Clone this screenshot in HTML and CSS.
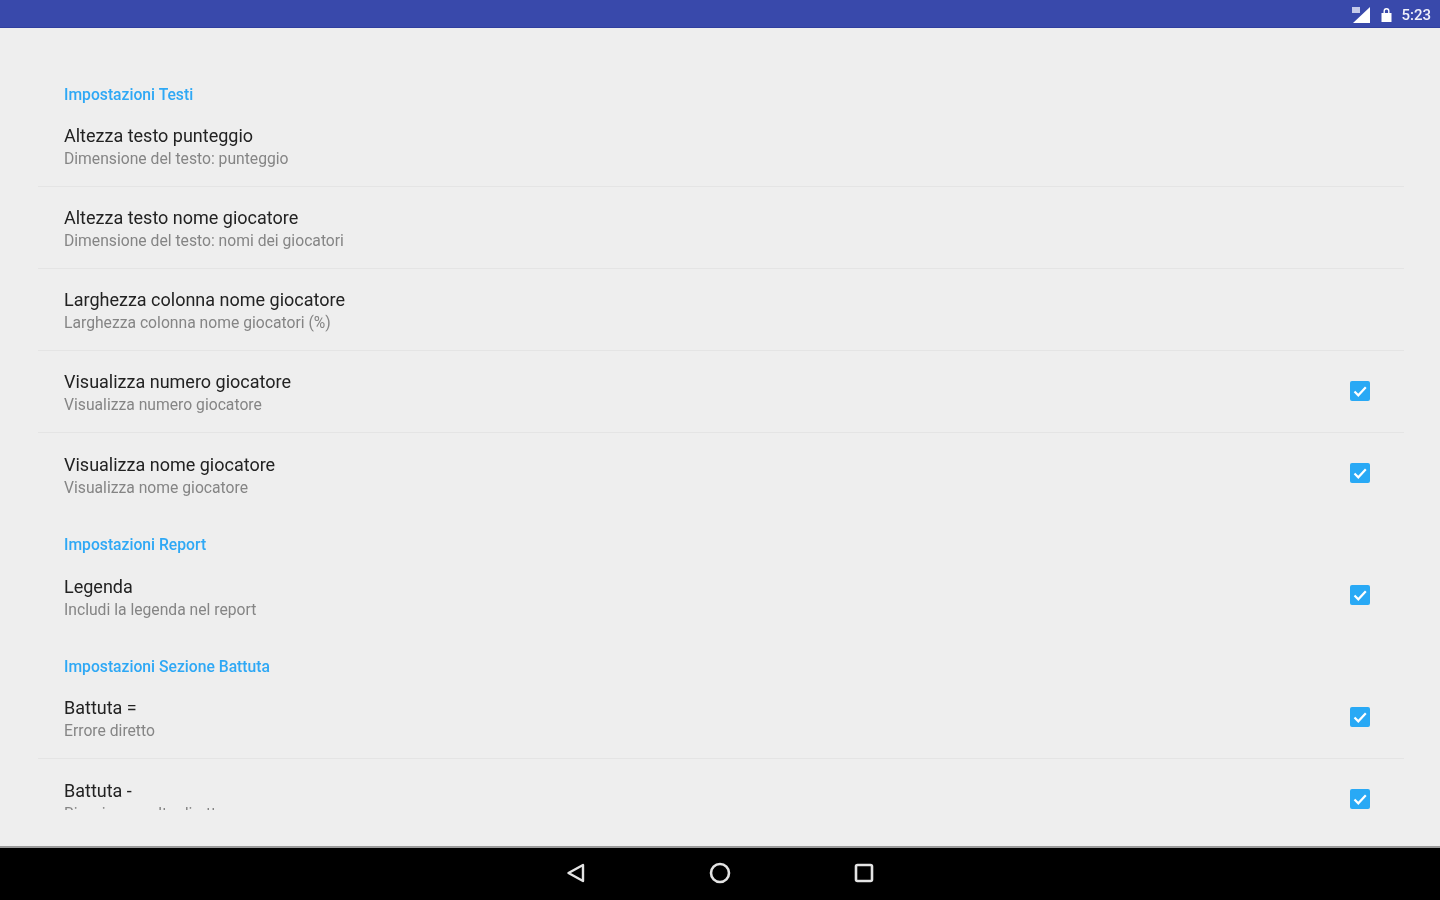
FILE: index.html
```html
<!DOCTYPE html>
<html lang="it">
<head>
<meta charset="utf-8">
<title>Impostazioni</title>
<link rel="stylesheet" href="styles.css">
</head>
<body>
<div class="screen">
  <header class="status">
    <svg class="ic-signal" viewBox="0 0 20 18"><path d="M19 1v16H2z" fill="#fff"/><path d="M1 1h8v6H1z" fill="#c5cae9"/></svg>
    <svg class="ic-lock" viewBox="0 0 12 16"><path d="M1 6h10v9H1zM3 6V4a3 3 0 0 1 6 0v2H7.600V4a1.600 1.600 0 0 0-3.200 0v2z" fill="#fff"/></svg>
    <span class="clock">5:23</span>
  </header>
  <main class="list">
    <h2 class="cat cat-first">Impostazioni Testi</h2>
    <div class="row div"><div class="txt"><div class="title">Altezza testo punteggio</div><div class="sub">Dimensione del testo: punteggio</div></div></div>
    <div class="row div"><div class="txt"><div class="title">Altezza testo nome giocatore</div><div class="sub">Dimensione del testo: nomi dei giocatori</div></div></div>
    <div class="row div"><div class="txt"><div class="title">Larghezza colonna nome giocatore</div><div class="sub">Larghezza colonna nome giocatori (%)</div></div></div>
    <div class="row div"><div class="txt"><div class="title">Visualizza numero giocatore</div><div class="sub">Visualizza numero giocatore</div></div><span class="check"><svg viewBox="0 0 20 20"><path d="M4.500 10.500l3.800 3.800 7.500-8" fill="none" stroke="#fff" stroke-width="2.200"/></svg></span></div>
    <div class="row"><div class="txt"><div class="title">Visualizza nome giocatore</div><div class="sub">Visualizza nome giocatore</div></div><span class="check"><svg viewBox="0 0 20 20"><path d="M4.500 10.500l3.800 3.800 7.500-8" fill="none" stroke="#fff" stroke-width="2.200"/></svg></span></div>
    <h2 class="cat">Impostazioni Report</h2>
    <div class="row"><div class="txt"><div class="title">Legenda</div><div class="sub">Includi la legenda nel report</div></div><span class="check"><svg viewBox="0 0 20 20"><path d="M4.500 10.500l3.800 3.800 7.500-8" fill="none" stroke="#fff" stroke-width="2.200"/></svg></span></div>
    <h2 class="cat">Impostazioni Sezione Battuta</h2>
    <div class="row div"><div class="txt"><div class="title">Battuta =</div><div class="sub">Errore diretto</div></div><span class="check"><svg viewBox="0 0 20 20"><path d="M4.500 10.500l3.800 3.800 7.500-8" fill="none" stroke="#fff" stroke-width="2.200"/></svg></span></div>
    <div class="row"><div class="txt"><div class="title">Battuta -</div><div class="sub">Ricezione molto diretto</div></div><span class="check"><svg viewBox="0 0 20 20"><path d="M4.500 10.500l3.800 3.800 7.500-8" fill="none" stroke="#fff" stroke-width="2.200"/></svg></span></div>
  </main>
  <nav class="nav">
    <svg class="nav-ic" viewBox="0 0 24 24"><path d="M19 4v16L4.500 12z" fill="none" stroke="#e4e4e4" stroke-width="2.400" stroke-linejoin="round"/></svg>
    <svg class="nav-ic" viewBox="0 0 24 24"><circle cx="12" cy="12" r="9" fill="none" stroke="#e4e4e4" stroke-width="2.600"/></svg>
    <svg class="nav-ic" viewBox="0 0 24 24"><rect x="4" y="4" width="16" height="16" rx="1.500" fill="none" stroke="#e4e4e4" stroke-width="2.600"/></svg>
  </nav>
</div>
</body>
</html>
```
FILE: styles.css
```css
html, body { margin: 0; padding: 0; }
body { background: #eeeeee; font-family: Roboto, "Liberation Sans", sans-serif; }
.screen { width: 1440px; height: 900px; display: flex; flex-direction: column; overflow: hidden; }
.status { height: 28px; flex: none; box-sizing: border-box; background: #3949ab; border-bottom: 1px solid #303f9f; display: flex; align-items: center; justify-content: flex-end; padding: 3px 9px 0 0; gap: 9px; color: #f0f1fa; }
.ic-signal { width: 20px; height: 18px; filter: blur(0.7px); }
.ic-lock { width: 13px; height: 16px; margin-right: -1px; filter: blur(0.7px); }
.clock { font-size: 15px; font-weight: 500; filter: blur(0.6px); }
.list { height: 782px; flex: none; overflow: hidden; padding: 0 36px 0 38px; }
.cat { margin: 0; height: 40px; box-sizing: border-box; padding: 23px 0 0 26px; font-size: 15.700px; line-height: 14px; font-weight: 500; color: #2ea8f5; filter: blur(0.7px); }
.cat-first { height: 77px; padding-top: 60px; }
.row { height: 82px; box-sizing: border-box; display: flex; align-items: center; padding: 0 34px 0 26px; justify-content: space-between; }
.div { border-bottom: 1px solid #e4e4e4; }
.txt { filter: blur(0.7px); padding-top: 3px; }
.title { font-size: 18px; line-height: 24px; color: #222222; }
.sub { font-size: 15.700px; line-height: 22px; color: #858585; }
.check { width: 20px; height: 20px; border-radius: 2px; background: #29a9f5; display: block; filter: blur(0.5px); margin-bottom: 2px; }
.check svg { display: block; width: 20px; height: 20px; }
.nav { flex: 1; background: #000; border-top: 2px solid #9a9a9a; box-sizing: border-box; display: flex; align-items: center; justify-content: center; gap: 120px; margin-top: 36px; padding-bottom: 2px; }
.nav-ic { width: 24px; height: 24px; filter: blur(0.6px); }
```
